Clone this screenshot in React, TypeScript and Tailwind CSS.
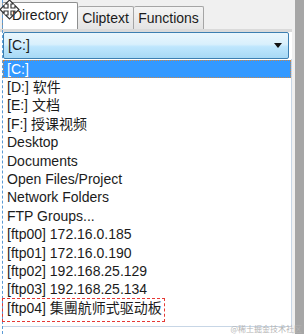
const rows = [
  "[D:] 软件",
  "[E:] 文档",
  "[F:] 授课视频",
  "Desktop",
  "Documents",
  "Open Files/Project",
  "Network Folders",
  "FTP Groups...",
  "[ftp00] 172.16.0.185",
  "[ftp01] 172.16.0.190",
  "[ftp02] 192.168.25.129",
  "[ftp03] 192.168.25.134",
  "[ftp04] 集團航师式驱动板",
];

const MoveCursor = () => (
  <svg width="21" height="21" viewBox="0 0 20 20" className="absolute left-[-1px] top-[-1px]">
    <path
      d="M10 1 L13.8 4.8 L11.4 4.8 L11.4 8.6 L15.2 8.6 L15.2 6.2 L19 10 L15.2 13.8 L15.2 11.4 L11.4 11.4 L11.4 15.2 L13.8 15.2 L10 19 L6.2 15.2 L8.6 15.2 L8.6 11.4 L4.8 11.4 L4.8 13.8 L1 10 L4.8 6.2 L4.8 8.6 L8.6 8.6 L8.6 4.8 L6.2 4.8 Z"
      fill="#ffffff"
      stroke="#333333"
      strokeWidth="1.1"
    />
  </svg>
);

const App = () => {
  return (
    <div className="relative flex h-[334px] w-[304px] overflow-hidden bg-white font-['Liberation_Sans','Noto_Sans_CJK_SC',sans-serif] text-[14px] text-[#1b1b1b]">
      <div className="flex w-[292px] flex-col">
        {/* TABS */}
        <div className="flex h-[29px] items-end bg-[#f0f0f0] pl-[2px]">
          <div className="flex h-[27px] w-[76px] items-center justify-center rounded-t-[2px] border border-b-0 border-[#8e8f8f] bg-white pb-[2px]">
            Directory
          </div>
          <div className="flex h-[23px] w-[56px] items-center justify-center rounded-t-[2px] border border-b-0 border-l-0 border-[#a5a5a5] bg-gradient-to-b from-[#f4f4f4] to-[#e4e4e4]">
            Cliptext
          </div>
          <div className="flex h-[23px] w-[70px] items-center justify-center rounded-t-[2px] border border-b-0 border-l-0 border-[#a5a5a5] bg-gradient-to-b from-[#f4f4f4] to-[#e4e4e4]">
            Functions
          </div>
        </div>
        <div className="h-[3px] bg-[#dadada]" />

        {/* COMBO */}
        <div className="mx-[3px] flex h-[27px] items-center justify-between rounded-[2px] border border-[#3c7fb1] bg-[linear-gradient(#eaf6fd,#d9f0fc_45%,#bee6fd_55%,#a7d9f5)] pl-[4px] pr-[6px]">
          <span>[C:]</span>
          <svg width="8" height="5" viewBox="0 0 8 5">
            <path d="M0 0 H8 L4 5 Z" fill="#111111" />
          </svg>
        </div>

        {/* LIST */}
        <div className="ml-[3px] flex flex-1 flex-col border-b border-r border-[#c7d6e6] pt-[1px]">
          <div className="flex h-[18.4px] items-center border border-dotted border-[#c8874a] bg-[#3399ff] pl-[3px] text-white">
            [C:]
          </div>
          {rows.map((r) => (
            <div key={r} className="flex h-[18.4px] items-center whitespace-nowrap pl-[4px]">
              {r}
            </div>
          ))}
        </div>
        <div className="h-[7px]" />
      </div>
      <div className="w-[3px] bg-[#f0f0f0]" />
      <div className="flex-1 bg-[#a6a6a6]" />

      {/* overlays */}
      <div className="absolute bottom-0 left-[2px] top-0 border-l border-dashed border-[#5b9bd5]" />
      <div className="absolute left-[2px] top-[298px] h-[24px] w-[163px] border-[1.5px] border-dashed border-[#e53935]" />
      <MoveCursor />
      <div className="absolute bottom-[1px] right-[2px] font-['Noto_Sans_CJK_SC',sans-serif] text-[8px] leading-none text-[#b4b4b4]">
        @稀土掘金技术社区
      </div>
    </div>
  );
};

export default App;
